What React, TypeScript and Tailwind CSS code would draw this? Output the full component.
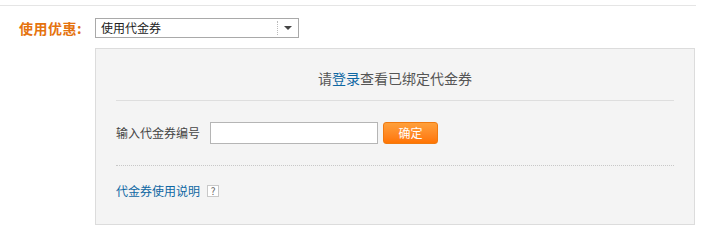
import React from 'react';

const font = { fontFamily: '"Noto Sans CJK SC", "Noto Sans", sans-serif' };

export default function App() {
  return (
    <div className="w-[719px] h-[233px] bg-white relative" style={font}>
      <div className="pt-[5px]">
        <div className="w-[696px] border-t border-[#e5e5e5]" />
      </div>

      <div className="flex mt-[12px]">
        <div className="w-[95px] pl-[19px] text-[14px] leading-[20px] font-bold text-[#e5730e] tracking-[0.5px]">使用优惠:</div>
        <div>
          <div className="w-[204px] h-[20px] border border-[#a9a9a9] bg-white flex items-center text-[12px] text-[#222]">
            <span className="flex-1 pl-[5px] leading-[18px]">使用代金券</span>
            <span className="h-[14px] border-l border-dotted border-[#bbb]" />
            <span className="w-[20px] flex justify-center">
              <span className="w-0 h-0 border-l-[4px] border-r-[4px] border-t-[4px] border-l-transparent border-r-transparent border-t-[#444]" />
            </span>
          </div>

          <div className="mt-[10px] w-[600px] h-[177px] border border-[#dcdcdc] bg-[#f4f4f4] px-[20px]">
            <div className="pt-[19px] text-center text-[14px] leading-[20px] text-[#555]">
              请<a className="text-[#0e67a3]">登录</a>查看已绑定代金券
            </div>
            <div className="mt-[12px] border-t border-[#dedede]" />

            <div className="mt-[21px] flex items-center h-[22px]">
              <span className="text-[12px] text-[#444] w-[94px]">输入代金券编号</span>
              <div className="w-[168px] h-[22px] border border-[#b5b5b5] bg-white" />
              <button className="ml-[5px] w-[55px] h-[22px] rounded-[3px] bg-gradient-to-b from-[#ffa03a] to-[#ff7400] border border-[#f07a10] text-white text-[12px] leading-[20px]">
                确定
              </button>
            </div>

            <div className="mt-[21px] border-t border-dotted border-[#c8c8c8]" />

            <div className="mt-[15px] flex items-center h-[20px]">
              <a className="text-[12px] text-[#0e67a3]">代金券使用说明</a>
              <span className="ml-[7px] w-[12px] h-[12px] border border-[#c8c8c8] bg-white flex items-center justify-center text-[10px] leading-none text-[#666]">?</span>
            </div>
          </div>
        </div>
      </div>
    </div>
  );
}
